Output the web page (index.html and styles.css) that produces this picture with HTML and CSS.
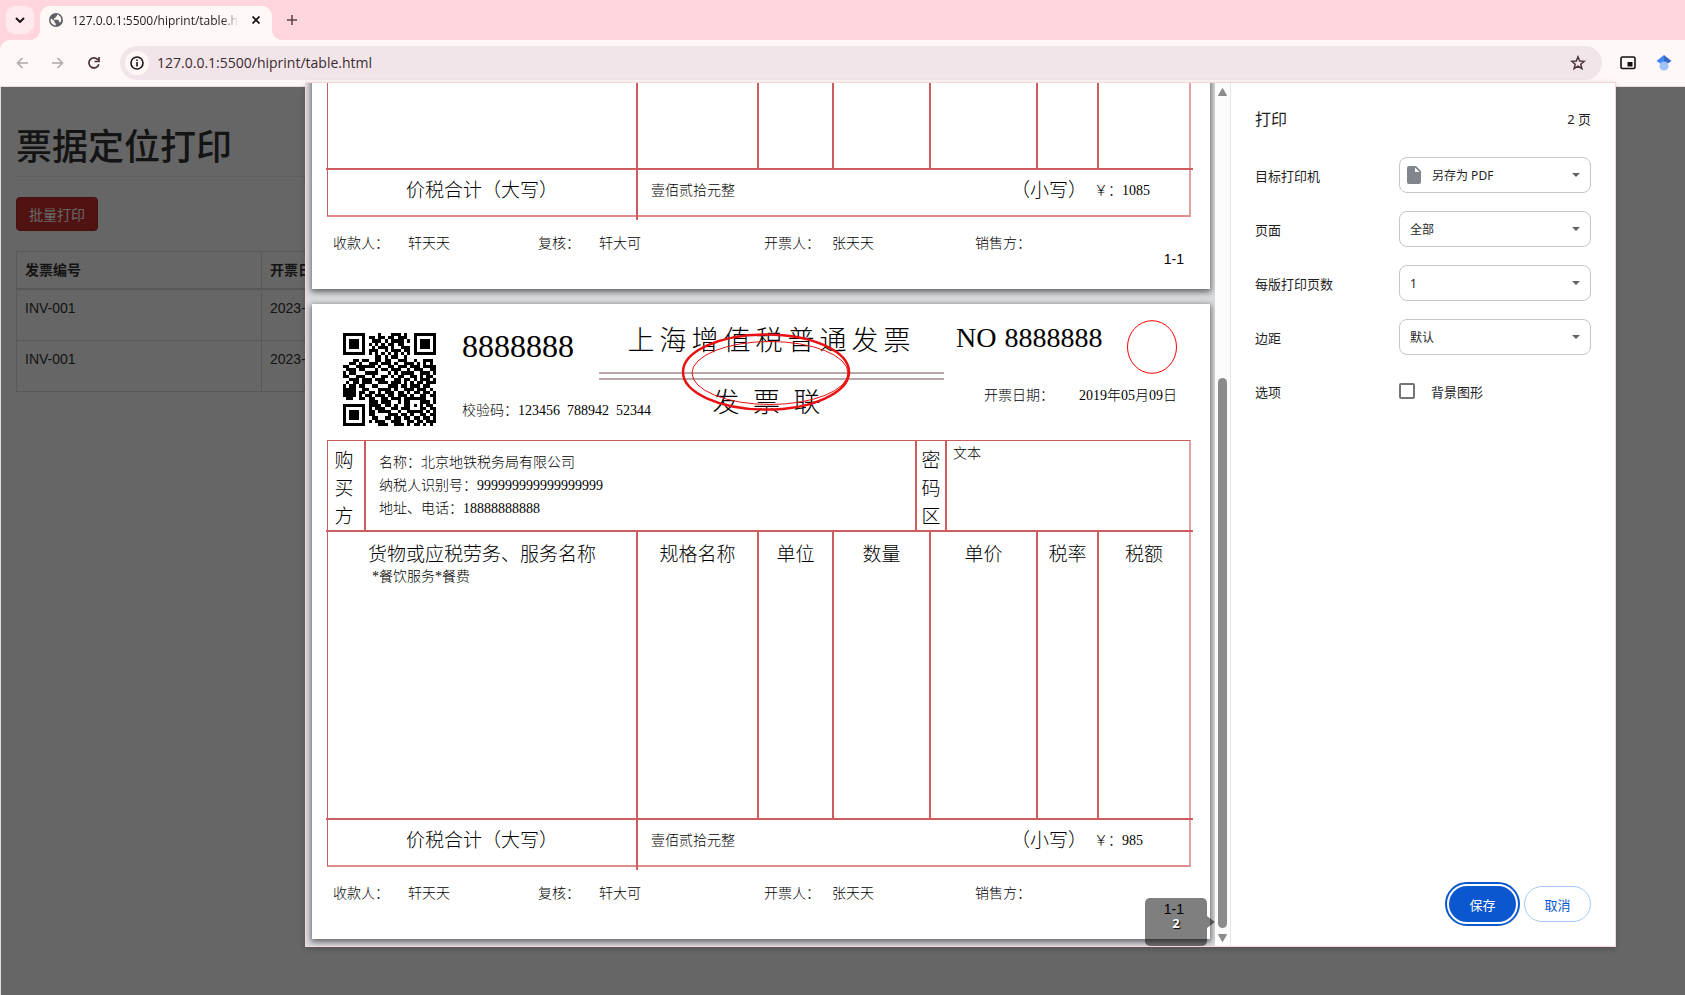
FILE: index.html
```html
<!doctype html>
<html lang="zh-CN">
<head>
  <meta charset="UTF-8">
  <meta name="viewport" content="width=device-width, initial-scale=1">
  <title>票据定位打印</title>
  <link rel="stylesheet" href="styles.css">
</head>
<body>
<header class="browser">
  <div class="tab-strip">
    <button class="tab-search" aria-label="搜索标签页">
      <svg width="10" height="6" viewBox="0 0 10 6"><path d="M1 1l4 4 4-4" fill="none" stroke="#1f1416" stroke-width="2"/></svg>
    </button>
    <div class="tab">
      <svg class="globe" width="14" height="14" viewBox="0 0 14 14">
        <circle cx="7" cy="7" r="7" fill="#5f6368"/>
        <path d="M2 5.500L5.500 8v1.500l1.200 1v1.900C3.800 12.200 1.500 9.800 1.500 7zM8 1.600v1.300L6.500 4v1.200H5v1.500h4l1 1v1.500h1.500C13 7 12.500 2.800 8 1.600z" fill="#fff8f6"/>
      </svg>
      <span class="tab-title">127.0.0.1:5500/hiprint/table.html</span>
      <button class="tab-close" aria-label="关闭">
        <svg width="8" height="8" viewBox="0 0 8 8"><path d="M0.500 0.500l7 7M7.500 0.500l-7 7" stroke="#1f1416" stroke-width="1.800"/></svg>
      </button>
    </div>
    <button class="tab-new" aria-label="新标签页">
      <svg width="10" height="10" viewBox="0 0 10 10"><path d="M5 0v10M0 5h10" stroke="#5a4146" stroke-width="1.500"/></svg>
    </button>
  </div>
  <div class="toolbar">
    <button class="nav faded" aria-label="后退">
      <svg width="12" height="12" viewBox="0 0 12 12"><path d="M12 6H1.500M6.500 1L1.500 6l5 5" fill="none" stroke="currentColor" stroke-width="1.500"/></svg>
    </button>
    <button class="nav faded" aria-label="前进">
      <svg width="12" height="12" viewBox="0 0 12 12"><path d="M0 6h10.500M5.500 1l5 5-5 5" fill="none" stroke="currentColor" stroke-width="1.500"/></svg>
    </button>
    <button class="nav" aria-label="重新加载">
      <svg width="12" height="12" viewBox="0 0 12 12"><path d="M10.800 7.200A5 5 0 1 1 10 3M11 0v4.500H6.500" fill="none" stroke="currentColor" stroke-width="1.700"/></svg>
    </button>
    <div class="address">
      <span class="site-info">
        <svg width="14" height="14" viewBox="0 0 14 14"><circle cx="7" cy="7" r="6" fill="none" stroke="#1f1416" stroke-width="1.600"/><path d="M7 6v4.500M7 3.500v1.500" stroke="#1f1416" stroke-width="1.600"/></svg>
      </span>
      <input class="url" aria-label="地址" value="127.0.0.1:5500/hiprint/table.html">
      <button class="nav" aria-label="收藏">
        <svg width="16" height="16" viewBox="0 0 16 16"><path d="M8 1.800l1.700 4.200 4.600.3-3.500 2.900 1.100 4.400L8 11.200l-3.900 2.400 1.100-4.400L1.700 6.300 6.300 6z" fill="none" stroke="currentColor" stroke-width="1.500"/></svg>
      </button>
    </div>
    <button class="nav" aria-label="画中画">
      <svg width="16" height="14" viewBox="0 0 16 14"><rect x="1" y="1" width="14" height="11.500" rx="1.500" fill="none" stroke="#111" stroke-width="1.600"/><path d="M7.500 6h5v4.500h-5z" fill="#111"/></svg>
    </button>
    <button class="nav" aria-label="Scholar">
      <svg width="16" height="16" viewBox="0 0 16 16"><path d="M8 0L0.500 6 8 11z" fill="#4285f4"/><path d="M8 0l7.500 6L8 11z" fill="#356ac3"/><circle cx="8" cy="11" r="4.600" fill="#a0c3ff"/></svg>
    </button>
  </div>
</header>

<main class="site">
  <div class="container">
    <h1>票据定位打印</h1>
    <button class="btn-danger">批量打印</button>
    <table class="invoice-list">
      <thead>
        <tr><th class="col-id">发票编号</th><th>开票日期</th></tr>
      </thead>
      <tbody>
        <tr><td>INV-001</td><td>2023-01-01</td></tr>
        <tr><td>INV-001</td><td>2023-01-01</td></tr>
      </tbody>
    </table>
  </div>
  <div class="backdrop"></div>
</main>

<section class="dialog" role="dialog" aria-label="打印">
  <div class="preview">
    <div class="pages" id="pages"></div>
    <div class="page-number">2</div>
    <div class="scrollbar">
      <svg width="9" height="8" viewBox="0 0 9 8"><path d="M4.500 0.500L8.500 7.500h-8z" fill="#8b8b8b" stroke="#8b8b8b" stroke-linejoin="round"/></svg>
      <span class="scroll-gap"></span>
      <span class="scroll-thumb"></span>
      <svg width="9" height="8" viewBox="0 0 9 8"><path d="M4.500 7.500L8.500 0.500h-8z" fill="#8b8b8b" stroke="#8b8b8b" stroke-linejoin="round"/></svg>
    </div>
  </div>
  <form class="settings">
    <div class="settings-head">
      <h2>打印</h2>
      <span>2 页</span>
    </div>
    <div class="setting">
      <label for="printer">目标打印机</label>
      <div class="select with-icon">
        <svg class="file-icon" width="14" height="18" viewBox="0 0 14 18"><path d="M2 0h7l5 5v11a2 2 0 0 1-2 2H2a2 2 0 0 1-2-2V2a2 2 0 0 1 2-2z" fill="#80868b"/><path d="M8 1.500V6h4.500z" fill="#fff"/></svg>
        <select id="printer"><option>另存为 PDF</option></select>
        <svg class="caret" width="8" height="4" viewBox="0 0 8 4"><path d="M0 0h8L4 4z" fill="#5f6368"/></svg>
      </div>
    </div>
    <div class="setting">
      <label for="range">页面</label>
      <div class="select">
        <select id="range"><option>全部</option></select>
        <svg class="caret" width="8" height="4" viewBox="0 0 8 4"><path d="M0 0h8L4 4z" fill="#5f6368"/></svg>
      </div>
    </div>
    <div class="setting">
      <label for="perSheet">每版打印页数</label>
      <div class="select">
        <select id="perSheet"><option>1</option></select>
        <svg class="caret" width="8" height="4" viewBox="0 0 8 4"><path d="M0 0h8L4 4z" fill="#5f6368"/></svg>
      </div>
    </div>
    <div class="setting">
      <label for="margins">边距</label>
      <div class="select">
        <select id="margins"><option>默认</option></select>
        <svg class="caret" width="8" height="4" viewBox="0 0 8 4"><path d="M0 0h8L4 4z" fill="#5f6368"/></svg>
      </div>
    </div>
    <div class="setting">
      <span>选项</span>
      <label class="check"><input type="checkbox">背景图形</label>
    </div>
    <div class="actions">
      <button type="button" class="save">保存</button>
      <button type="button" class="cancel">取消</button>
    </div>
  </form>
</section>

<script src="invoice.js"></script>
</body>
</html>
```

FILE: styles.css
```css
* {
  box-sizing: border-box;
}
body {
  margin: 0;
  height: 100vh;
  display: flex;
  flex-direction: column;
  overflow: hidden;
  font-family: "Noto Sans", "Noto Sans CJK SC", sans-serif;
  font-size: 13px;
  color: #1f1f1f;
}
button {
  font: inherit;
  border: none;
  padding: 0;
  background: none;
}
svg {
  display: block;
  flex: none;
}

/* browser frame */
.tab-strip {
  display: flex;
  align-items: center;
  height: 40px;
  padding: 0 6px;
  background: #ffd6de;
}
.tab-search {
  display: grid;
  place-items: center;
  width: 28px;
  height: 28px;
  border-radius: 9px;
  background: #ffebee;
}
.tab {
  position: relative;
  display: flex;
  align-items: center;
  gap: 9px;
  align-self: flex-end;
  width: 232px;
  height: 34px;
  margin-left: 6px;
  padding: 0 8px 6px 9px;
  border-radius: 10px 10px 0 0;
  background: #fff8f6;
}
.tab::before,
.tab::after {
  content: "";
  position: absolute;
  bottom: 0;
  width: 10px;
  height: 10px;
}
.tab::before {
  left: -10px;
  background: radial-gradient(circle at 0 0, #ffd6de 10px, #fff8f6 10px);
}
.tab::after {
  right: -10px;
  background: radial-gradient(circle at 100% 0, #ffd6de 10px, #fff8f6 10px);
}
.tab-title {
  flex: 1;
  overflow: hidden;
  white-space: nowrap;
  font-family: "Open Sans", sans-serif;
  font-size: 12px;
  -webkit-mask-image: linear-gradient(to right, #000 90%, transparent);
  mask-image: linear-gradient(to right, #000 90%, transparent);
}
.tab-close {
  padding: 4px;
}
.tab-new {
  margin-left: 15px;
}
.toolbar {
  display: flex;
  align-items: center;
  gap: 16px;
  height: 47px;
  padding: 0 11px 1px 12px;
  border-bottom: 1px solid #f3d9de;
  border-radius: 10px 0 0 0;
  background: #fff8f6;
}
.browser {
  background: #ffd6de;
}
.nav {
  display: grid;
  place-items: center;
  width: 20px;
  height: 20px;
  color: #4a3439;
}
.faded {
  color: #b3a6a8;
}
.address {
  flex: 1;
  display: flex;
  align-items: center;
  height: 34px;
  padding: 0 14px 0 5px;
  border-radius: 17px;
  background: #f2e5e9;
}
.site-info {
  display: grid;
  place-items: center;
  width: 24px;
  height: 24px;
  border-radius: 50%;
  background: #fff8f6;
}
.url {
  flex: 1;
  border: none;
  padding: 0 8px;
  background: none;
  font-family: "Open Sans", sans-serif;
  font-size: 14px;
  color: #3a2c30;
}

/* site behind the dialog */
.site {
  position: relative;
  flex: 1;
  border-left: 1px solid #ddd;
}
.container {
  max-width: 1170px;
  padding: 0 15px;
  font-family: "Liberation Sans", "Noto Sans CJK SC", sans-serif;
  font-size: 14px;
  color: #333;
}
.container h1 {
  margin: 0 0 20px;
  padding: 35px 0 3px;
  border-bottom: 1px solid #eee;
  font-size: 36px;
  font-weight: 500;
  line-height: 51px;
}
.btn-danger {
  height: 34px;
  padding: 0 12px;
  border: 1px solid #ac2925;
  border-radius: 4px;
  background: #c9302c;
  color: #fff;
}
.invoice-list {
  width: 100%;
  margin-top: 20px;
  border-collapse: collapse;
  line-height: 20px;
}
.invoice-list th,
.invoice-list td {
  padding: 8px;
  border: 1px solid #ddd;
  text-align: left;
  vertical-align: top;
}
.invoice-list th {
  border-bottom-width: 2px;
}
.invoice-list td {
  height: 51px;
}
.col-id {
  width: 245px;
}
.backdrop {
  position: absolute;
  inset: 0;
  background: rgba(0, 0, 0, 0.6);
}

/* print dialog */
.dialog {
  position: absolute;
  inset: 82px 69px 48px 305px;
  display: flex;
  border: 1px solid #f4d6dc;
  background: #fff;
  box-shadow: 0 2px 6px rgba(0, 0, 0, 0.2);
}
.preview {
  position: relative;
  flex: 1;
  display: flex;
  overflow: hidden;
  border-right: 1px solid #e4e4ea;
  background: #dadce0;
}
.pages {
  flex: 1;
  display: flex;
  flex-direction: column;
  justify-content: flex-end;
  gap: 15px;
  padding: 0 5px 7px 6px;
}
.scrollbar {
  display: flex;
  flex-direction: column;
  align-items: center;
  gap: 6px;
  width: 15px;
  padding: 5px 0 4px;
  background: #fcfcfc;
}
.scroll-gap {
  flex: 271;
}
.scroll-thumb {
  flex: 551;
  width: 9px;
  border-radius: 5px;
  background: #8b8b8b;
}
.page-number {
  position: absolute;
  right: 23px;
  bottom: 0;
  width: 62px;
  height: 48px;
  border-radius: 5px;
  background: rgba(0, 0, 0, 0.5);
  color: #fff;
  font-size: 13px;
  font-weight: 700;
  line-height: 50px;
  text-align: center;
  text-shadow: 1px 1px 1px #000;
}
.page-number::after {
  content: "";
  position: absolute;
  left: 100%;
  top: 18px;
  border: 6px solid transparent;
  border-left: 8px solid rgba(0, 0, 0, 0.5);
  border-right: none;
}

/* invoice sheet */
.sheet {
  flex: none;
  height: 635px;
  padding: 0 19px 0 15px;
  background: #fff;
  box-shadow: 0 2px 6px 1px rgba(0, 0, 0, 0.55);
  font-family: "Liberation Serif", "Noto Sans CJK SC", serif;
  font-size: 14px;
  font-weight: 300;
  color: #000;
}
.sheet-head {
  display: flex;
  height: 136px;
  padding: 16px 14px 0 16px;
  white-space: nowrap;
}
.qr {
  width: 93px;
  height: 93px;
  margin: 13px 26px 0 0;
}
.codes {
  display: flex;
  flex-direction: column;
  gap: 35px;
  width: 137px;
  padding-top: 8px;
}
.big {
  font-size: 28px;
  line-height: 36px;
}
.codes .big {
  font-size: 32px;
}
.title {
  position: relative;
  flex: 1;
  font-size: 27px;
  line-height: 42px;
  text-align: center;
}
.title p {
  margin: 0;
  padding-right: 10px;
}
.title .title-name {
  padding-right: 0;
  letter-spacing: 5px;
}
.double-rule {
  height: 8px;
  margin: 10px 0 2px;
  border: solid #b8a9a9;
  border-width: 2px 0;
}
.seal {
  position: absolute;
  left: 50%;
  top: 11px;
  margin-left: -92px;
}
.issue {
  width: 221px;
  margin-left: 12px;
}
.issue-no {
  display: flex;
  gap: 8px;
}
.issue-no svg {
  margin-left: auto;
}
.issue-date {
  display: flex;
  justify-content: space-between;
  padding: 10px 0 0 28px;
}
.frame {
  border: 1px solid #cd5c5c;
  border-right: 2px solid #e3a0a0;
  border-bottom: 2px solid #e08c8c;
}
.rule {
  height: 2px;
  margin: 0 -4px 0 -2px;
  background: #cd5c5c;
}
.buyer {
  display: grid;
  grid-template-columns: 36fr 551fr 30fr 244fr;
  height: 89px;
}
.buyer > div + div {
  border-left: 2px solid #cd5c5c;
}
.side-title {
  display: flex;
  flex-direction: column;
  align-items: center;
  padding: 6px 4px 0 0;
  font-size: 19px;
  line-height: 28px;
}
.buyer > .side-title + .buyer-info ~ .side-title {
  padding-right: 0;
}
.buyer-info {
  padding: 10px 13px;
  line-height: 23px;
}
.secret {
  padding: 1px 6px;
}
.goods {
  width: 100%;
  height: 286px;
  border-spacing: 0;
  table-layout: fixed;
}
.goods th,
.goods td {
  padding: 0;
  text-align: center;
  vertical-align: top;
}
.goods th + th,
.goods td + td {
  border-left: 2px solid #cd5c5c;
}
.goods th {
  height: 34px;
  padding-top: 9px;
  font-size: 19px;
  font-weight: 300;
  line-height: 28px;
}
.goods td:first-child {
  padding-left: 44px;
  text-align: left;
  line-height: 16px;
}
.c-name { width: calc(100% * 308 / 861); }
.c-spec { width: calc(100% * 121 / 861); }
.c-unit { width: calc(100% * 75 / 861); }
.c-count { width: calc(100% * 97 / 861); }
.c-price { width: calc(100% * 107 / 861); }
.c-rate { width: calc(100% * 61 / 861); }
.total {
  display: grid;
  grid-template-columns: 310fr 366fr 90fr 95fr;
  height: 45px;
  line-height: 41px;
}
.total-label {
  font-size: 19px;
  text-align: center;
}
.total > .total-label:first-child {
  height: 50px;
  border-right: 2px solid #cd5c5c;
}
.total-words {
  padding-left: 13px;
}
.signs {
  display: grid;
  grid-template-columns: 75fr 130fr 61fr 165fr 68fr 143fr 216fr;
  padding: 17px 0 0 6px;
  line-height: 20px;
}
.sheet-no {
  padding-right: 7px;
  font-family: "Liberation Sans", sans-serif;
  font-size: 14px;
  font-weight: 400;
  line-height: 11px;
  text-align: right;
}

/* settings column */
.settings {
  display: flex;
  flex-direction: column;
  width: 384px;
  padding: 18px 24px 24px;
}
.settings-head {
  display: flex;
  justify-content: space-between;
  align-items: center;
  height: 34px;
  margin-bottom: 13px;
}
.settings-head h2 {
  margin: 0;
  font-size: 16px;
  font-weight: 400;
}
.setting {
  display: flex;
  justify-content: space-between;
  align-items: center;
  height: 54px;
}
.select,
.check {
  position: relative;
  width: 192px;
}
.select select {
  appearance: none;
  width: 100%;
  height: 36px;
  padding: 0 10px;
  border: 1px solid #c4c7c5;
  border-radius: 8px;
  background: #fff;
  color: #1f1f1f;
  font: inherit;
  font-size: 12px;
}
.with-icon select {
  padding-left: 32px;
}
.file-icon {
  position: absolute;
  left: 8px;
  top: 9px;
}
.caret {
  position: absolute;
  right: 11px;
  top: 16px;
}
.check {
  display: flex;
  align-items: center;
  gap: 16px;
}
.check input {
  appearance: none;
  width: 16px;
  height: 16px;
  margin: 0;
  border: 2px solid #757575;
  border-radius: 2px;
}
.actions {
  display: flex;
  justify-content: flex-end;
  gap: 8px;
  margin-top: auto;
}
.actions button {
  width: 67px;
  height: 36px;
  border-radius: 18px;
}
.save {
  background: #0b57d0;
  color: #fff;
  outline: 2px solid #0b57d0;
  outline-offset: 2px;
}
.actions .cancel {
  border: 1px solid #a8c7fa;
  color: #0b57d0;
}
```

FILE: invoice.js
```js
const qrRows = [
  '11111110000100011101001111111',
  '10000010110110110111001000001',
  '10111010011101011110101011101',
  '10111010101010110110001011101',
  '10111010010111010011101011101',
  '10000010111001011101101000001',
  '11111110101010101010101111111',
  '00000000001101011001000000000',
  '00011011001101100111001001110',
  '00110100111011101001110101010',
  '11001111110100110111011101111',
  '01110110001011011100101110011',
  '10110001111000101011110011101',
  '11001110010011010110011010110',
  '00111011101110001101101011101',
  '01011011100111011101010110111',
  '10110110011000111011011101100',
  '11110011000111101001110111010',
  '11110110110101110110101101101',
  '11110101101110110111010011011',
  '01100110110011011101111111001',
  '00000000111011100101100011101',
  '11111110111101101001101010110',
  '10000010101110011011100011011',
  '10111010110111100100111110101',
  '10111010110000111011010011011',
  '10111010011001101101101101101',
  '10000010101110011100110110111',
  '11111110000111001110101101010'
];

const qrPath = qrRows
  .map((row, y) => [...row].map((bit, x) => bit === '1' ? `M${x} ${y}h1v1h-1z` : '').join(''))
  .join('');

const invoices = [{ amount: 1085 }, { amount: 985 }];

document.getElementById('pages').innerHTML = invoices.map(({ amount }) => `
  <article class="sheet">
    <div class="sheet-head">
      <svg class="qr" viewBox="0 0 29 29" shape-rendering="crispEdges"><path d="${qrPath}"/></svg>
      <div class="codes">
        <span class="big">8888888</span>
        <span>校验码：123456&ensp;788942&ensp;52344</span>
      </div>
      <div class="title">
        <svg class="seal" width="172" height="82" viewBox="0 0 172 82" fill="none" stroke="#e81212">
          <ellipse cx="86" cy="41" rx="83" ry="37.500" stroke-width="2.500"/>
          <ellipse cx="90" cy="42" rx="78" ry="31.500"/>
        </svg>
        <p class="title-name">上海增值税普通发票</p>
        <div class="double-rule"></div>
        <p>发&ensp;票&ensp;联</p>
      </div>
      <div class="issue">
        <div class="issue-no">
          <span class="big">NO</span>
          <span class="big">8888888</span>
          <svg width="52" height="54" viewBox="0 0 52 54"><ellipse cx="27" cy="27" rx="24.500" ry="26.300" fill="none" stroke="#f00"/></svg>
        </div>
        <div class="issue-date"><span>开票日期：</span><span>2019年05月09日</span></div>
      </div>
    </div>
    <div class="frame">
      <div class="buyer">
        <div class="side-title"><span>购</span><span>买</span><span>方</span></div>
        <div class="buyer-info">
          <div>名称：北京地铁税务局有限公司</div>
          <div>纳税人识别号：999999999999999999</div>
          <div>地址、电话：18888888888</div>
        </div>
        <div class="side-title"><span>密</span><span>码</span><span>区</span></div>
        <div class="secret">文本</div>
      </div>
      <div class="rule"></div>
      <table class="goods">
        <thead>
          <tr>
            <th class="c-name">货物或应税劳务、服务名称</th>
            <th class="c-spec">规格名称</th>
            <th class="c-unit">单位</th>
            <th class="c-count">数量</th>
            <th class="c-price">单价</th>
            <th class="c-rate">税率</th>
            <th>税额</th>
          </tr>
        </thead>
        <tbody>
          <tr><td>*餐饮服务*餐费</td><td></td><td></td><td></td><td></td><td></td><td></td></tr>
        </tbody>
      </table>
      <div class="rule"></div>
      <div class="total">
        <span class="total-label">价税合计（大写）</span>
        <span class="total-words">壹佰贰拾元整</span>
        <span class="total-label">（小写）</span>
        <span>￥：${amount}</span>
      </div>
    </div>
    <div class="signs">
      <span>收款人：</span><span>轩天天</span>
      <span>复核：</span><span>轩大可</span>
      <span>开票人：</span><span>张天天</span>
      <span>销售方：</span>
    </div>
    <div class="sheet-no">1-1</div>
  </article>`).join('');
```
